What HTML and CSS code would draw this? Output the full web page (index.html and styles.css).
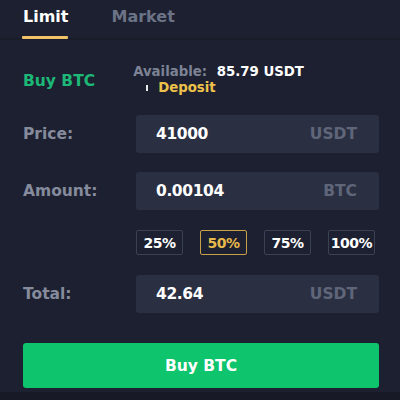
FILE: index.html
```html
<!DOCTYPE html>
<html lang="en">
<head>
<meta charset="utf-8">
<title>Spot order</title>
<link rel="stylesheet" href="styles.css">
</head>
<body>
<div class="panel">
  <nav class="tabs">
    <span class="tab active">Limit</span>
    <span class="tab">Market</span>
  </nav>

  <div class="form">
    <div class="summary">
      <span class="side">Buy BTC</span>
      <div class="balance">
        <div class="avail"><span class="muted">Available:</span> <span class="amt">85.79 USDT</span></div>
        <div class="deposit"><span class="tick"></span><span class="link">Deposit</span></div>
      </div>
    </div>

    <div class="row">
      <span class="label">Price:</span>
      <div class="field"><span class="value">41000</span><span class="unit">USDT</span></div>
    </div>

    <div class="row">
      <span class="label">Amount:</span>
      <div class="field"><span class="value">0.00104</span><span class="unit">BTC</span></div>
    </div>

    <div class="pcts">
      <span class="pct">25%</span>
      <span class="pct on">50%</span>
      <span class="pct">75%</span>
      <span class="pct">100%</span>
    </div>

    <div class="row total">
      <span class="label">Total:</span>
      <div class="field"><span class="value">42.64</span><span class="unit">USDT</span></div>
    </div>

    <button class="buy">Buy BTC</button>
  </div>
</div>
</body>
</html>
```

FILE: styles.css
```css
html, body {
  margin: 0;
  padding: 0;
  background: #171a26;
}

body {
  font-family: "DejaVu Sans", "Noto Sans", sans-serif;
  font-weight: 700;
  color: #ffffff;
}

.panel {
  width: 400px;
  height: 392px;
  background: #1c2030;
  overflow: hidden;
}

.tabs {
  display: flex;
  gap: 43px;
  padding: 0 23px;
  height: 38px;
  border-bottom: 2px solid #191c29;
}

.tab {
  font-size: 16px;
  line-height: 34px;
  color: #6c7386;
  position: relative;
}

.tab.active {
  color: #ffffff;
}

.tab.active::after {
  content: "";
  position: absolute;
  left: -1px;
  right: 0;
  bottom: -1px;
  height: 3px;
  background: #f0c36a;
  border-radius: 1px;
}

.form {
  padding: 0 21px 0 23px;
}

.summary {
  display: flex;
  align-items: center;
  gap: 38px;
  padding-top: 21px;
  height: 37px;
}

.side {
  color: #1db877;
  font-size: 15.5px;
  margin-top: 2px;
}

.balance {
  display: flex;
  flex-direction: column;
  font-size: 13.3px;
  line-height: 15px;
}

.muted {
  color: #7d8395;
}

.amt {
  color: #ffffff;
  margin-left: 5px;
}

.deposit {
  display: flex;
  align-items: center;
  padding-left: 13px;
  margin-top: 1px;
}

.tick {
  width: 2px;
  height: 6px;
  background: #e8e8e8;
  margin-right: 10px;
  margin-top: 1px;
}

.link {
  color: #eec14b;
}

.row {
  display: flex;
  align-items: center;
  margin-top: 17px;
}

.row + .row {
  margin-top: 19px;
}

.label {
  width: 113px;
  color: #858b9c;
  font-size: 15.5px;
}

.field {
  flex: 1;
  height: 38px;
  background: #2a2f42;
  border-radius: 3px;
  display: flex;
  align-items: center;
  justify-content: space-between;
  padding: 0 22px 0 20px;
  font-size: 15.5px;
}

.value {
  color: #ffffff;
  letter-spacing: -0.4px;
}

.unit {
  color: #5f6679;
}

.pcts {
  display: flex;
  gap: 17px;
  margin: 20px 0 0 113px;
}

.pct {
  width: 45px;
  height: 23px;
  border: 1px solid #3b4153;
  border-radius: 2px;
  display: flex;
  align-items: center;
  justify-content: center;
  font-size: 14px;
  color: #ffffff;
  letter-spacing: -0.5px;
}

.pct.on {
  border-color: #c9a04a;
  color: #e6b94a;
}

.row.total {
  margin-top: 20px;
}

.buy {
  display: block;
  width: 100%;
  height: 45px;
  margin-top: 30px;
  border: 0;
  border-radius: 3px;
  background: #0ec46c;
  color: #ffffff;
  font-family: inherit;
  font-weight: 700;
  font-size: 15.5px;
}
```
